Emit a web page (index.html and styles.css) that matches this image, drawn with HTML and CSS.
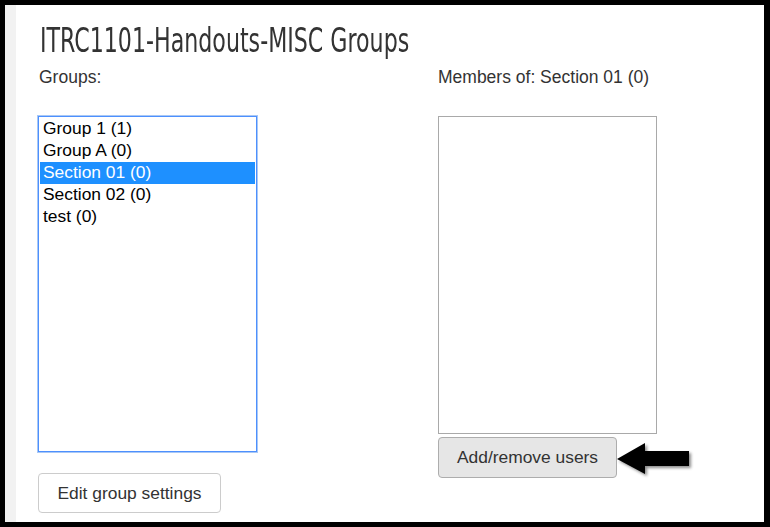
FILE: index.html
```html
<!DOCTYPE html>
<html>
<head>
<meta charset="utf-8">
<link rel="stylesheet" href="styles.css">
</head>
<body>
<div class="frame">
  <div class="page">
    <h1 class="title"><span class="title-text">ITRC1101-Handouts-MISC Groups</span></h1>
    <div class="columns">
      <div class="col">
        <div class="label label-groups">Groups:</div>
        <div class="listbox focused">
          <div class="opt">Group 1 (1)</div>
          <div class="opt">Group A (0)</div>
          <div class="opt selected">Section 01 (0)</div>
          <div class="opt">Section 02 (0)</div>
          <div class="opt">test (0)</div>
        </div>
        <button class="btn btn-default">Edit group settings</button>
      </div>
      <div class="col">
        <div class="label">Members of: Section 01 (0)</div>
        <div class="listbox members"></div>
        <div class="btn-row">
          <button class="btn btn-active">Add/remove users</button>
          <svg class="arrow" width="76" height="36" viewBox="0 0 76 36">
            <polygon points="0,16 28,0 28,8 72,8 72,23 28,23 28,31" fill="#000"/>
          </svg>
        </div>
      </div>
    </div>
  </div>
</div>
</body>
</html>
```
FILE: styles.css
```css
html, body {
  margin: 0;
  padding: 0;
}
body {
  background: #000;
  width: 770px;
  height: 527px;
  overflow: hidden;
  font-family: "Liberation Sans", Arial, sans-serif;
}
.frame {
  margin: 5px 6px 0 5px;
  height: 517px;
  background: #fff;
  border-left: 11px solid #f2f2f2;
  box-sizing: border-box;
}
.page {
  padding: 0 0 0 22px;
}
.title {
  margin: 0;
  padding-top: 15px;
  height: 42px;
  font-family: "DejaVu Sans", sans-serif;
  font-stretch: condensed;
  font-weight: normal;
  font-size: 34px;
  line-height: 40px;
  color: #333;
  white-space: nowrap;
}
.title-text {
  display: inline-block;
  transform-origin: left center;
  transform: scaleX(0.724);
  margin-left: 2px;
}
.columns {
  display: grid;
  grid-template-columns: 400px 220px;
}
.col {
  display: flex;
  flex-direction: column;
  align-items: flex-start;
}
.label {
  font-size: 17.5px;
  line-height: 20px;
  color: #333;
  margin: 5px 0 0 0;
  height: 20px;
  white-space: nowrap;
}
.label-groups {
  margin-left: 1px;
}
.listbox {
  margin-top: 29px;
  box-sizing: border-box;
  width: 219px;
  background: #fff;
  padding: 1px;
}
.listbox.focused {
  height: 336px;
  border: 1px solid #4d90fe;
  box-shadow: 0 0 0 1px #a9c8f5;
}
.listbox.members {
  height: 318px;
  border: 1px solid #a9a9a9;
}
.opt {
  height: 22px;
  box-sizing: border-box;
  line-height: 20px;
  padding-bottom: 2px;
  font-size: 17.4px;
  color: #000;
  padding-left: 3px;
  white-space: nowrap;
}
.opt.selected {
  background: #1e90ff;
  color: #fff;
}
.btn {
  font-family: "Liberation Sans", Arial, sans-serif;
  font-size: 17.4px;
  color: #333;
  border-radius: 4px;
  box-sizing: border-box;
  cursor: pointer;
  margin: 0;
  white-space: nowrap;
}
.btn-default {
  margin-top: 21px;
  height: 40px;
  width: 183px;
  background: #fff;
  border: 1px solid #ccc;
  padding: 0 10px;
}
.btn-row {
  display: flex;
  align-items: flex-start;
  margin-top: 3px;
}
.btn-active {
  height: 41px;
  width: 179px;
  background: #e6e6e6;
  border: 1px solid #adadad;
  padding: 0 10px;
}
.arrow {
  margin-top: 6px;
  filter: drop-shadow(2px 2px 1.5px rgba(0,0,0,0.45));
}
```
